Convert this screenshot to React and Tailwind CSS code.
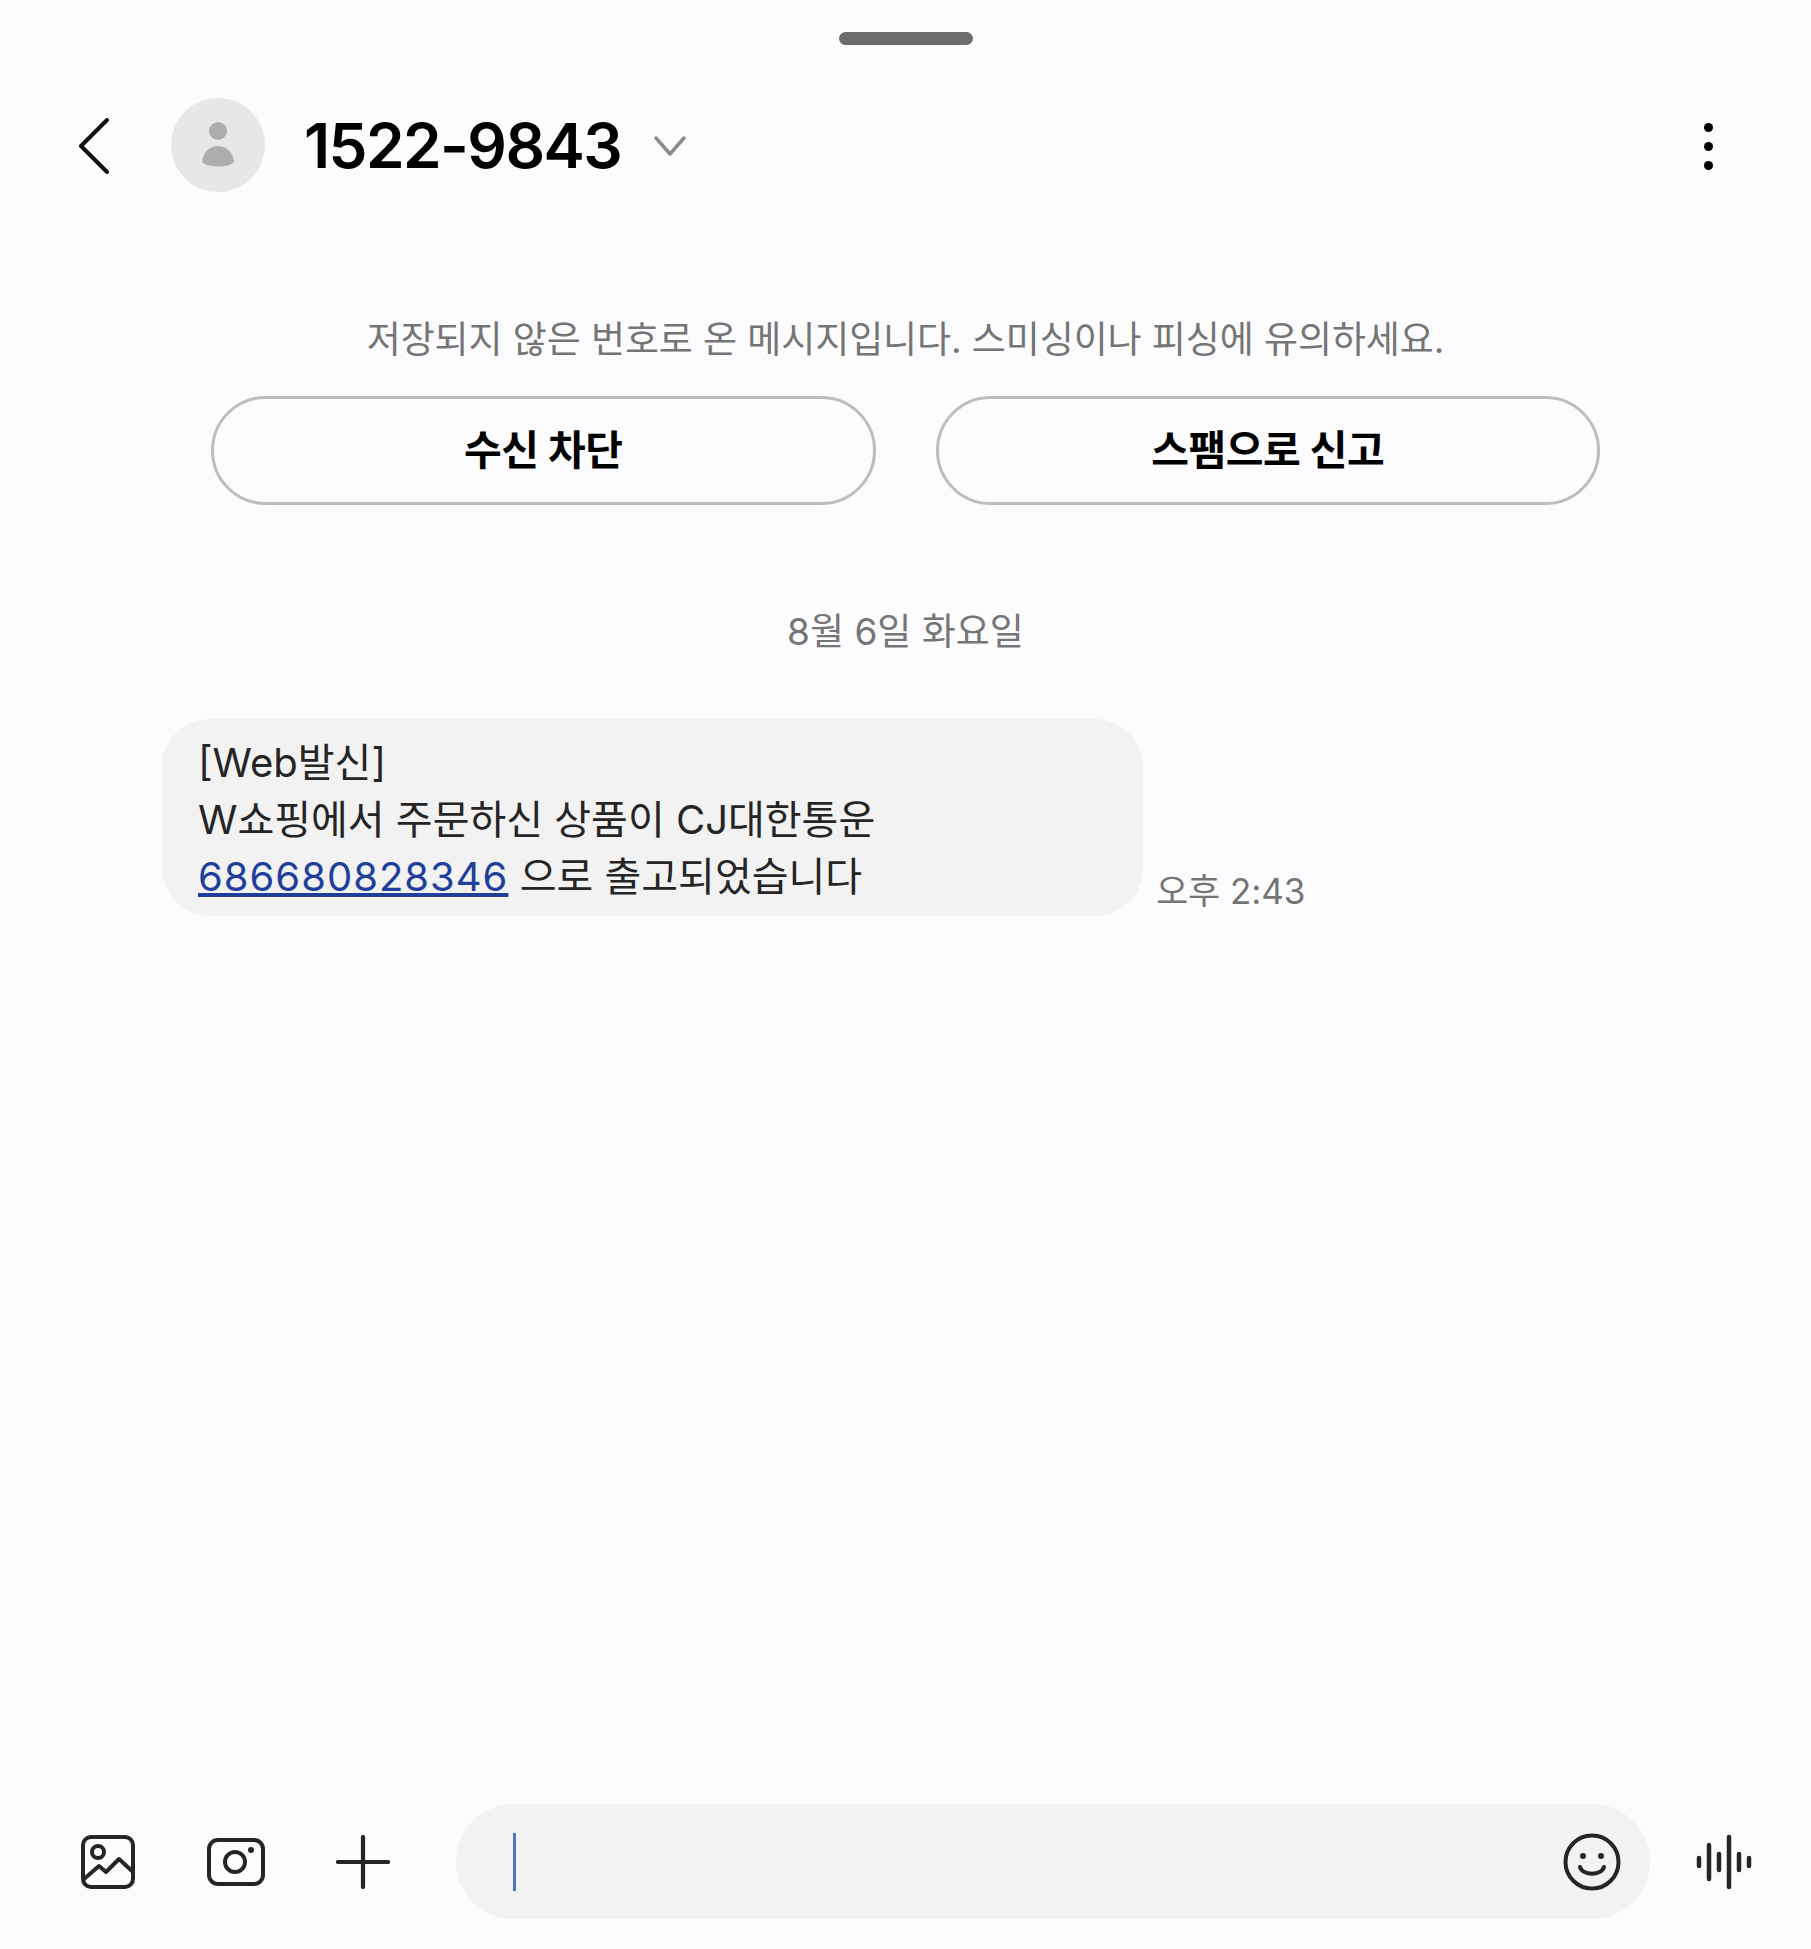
import React from 'react';

const font = { fontFamily: 'Inter, "Noto Sans CJK KR", sans-serif' };

function BackIcon() {
  return (
    <svg className="mt-[2px]" width="32" height="56" viewBox="0 0 32 56" fill="none" stroke="#111" strokeWidth="4" strokeLinecap="round" strokeLinejoin="round">
      <path d="M28 2 L2 28 L28 54" />
    </svg>
  );
}

function PersonIcon() {
  return (
    <svg width="32" height="46" viewBox="0 0 32 46" fill="#adadad">
      <circle cx="16" cy="9" r="9" />
      <path d="M0 40 C1 30 8 24 16 24 C24 24 31 30 32 40 C27 46 5 46 0 40 Z" />
    </svg>
  );
}

function GalleryIcon() {
  return (
    <svg width="54" height="54" viewBox="0 0 54 54" fill="none" stroke="#252525" strokeWidth="4" strokeLinecap="round" strokeLinejoin="round">
      <rect x="2" y="2" width="50" height="50" rx="8" />
      <circle cx="17" cy="17" r="6" />
      <path d="M3 44 L18 31 L25 37 L38 24 L51 36" />
    </svg>
  );
}

function CameraIcon() {
  return (
    <svg width="58" height="48" viewBox="0 0 58 48" fill="none" stroke="#252525" strokeWidth="4">
      <rect x="2" y="2" width="54" height="44" rx="9" />
      <circle cx="28" cy="24" r="10" />
      <circle cx="44" cy="12" r="3" fill="#252525" stroke="none" />
    </svg>
  );
}

function PlusIcon() {
  return (
    <svg width="54" height="54" viewBox="0 0 54 54" fill="none" stroke="#252525" strokeWidth="4.2" strokeLinecap="round">
      <path d="M27 2 V52 M2 27 H52" />
    </svg>
  );
}

function SmileIcon() {
  return (
    <svg width="58" height="58" viewBox="0 0 58 58" fill="none" stroke="#252525" strokeWidth="4" strokeLinecap="round">
      <circle cx="29" cy="29" r="26.5" />
      <circle cx="20" cy="23" r="3" fill="#252525" stroke="none" />
      <circle cx="38" cy="23" r="3" fill="#252525" stroke="none" />
      <path d="M17 34 C20 43 38 43 41 34" strokeWidth="4" />
    </svg>
  );
}

function WaveIcon() {
  return (
    <svg width="58" height="56" viewBox="0 0 58 56" fill="none" stroke="#252525" strokeWidth="4.5" strokeLinecap="round">
      <path d="M3 24 V32 M13 11 V45 M23 20 V36 M33 3 V53 M43 20 V36 M53 24 V32" />
    </svg>
  );
}

export default function App() {
  return (
    <div className="flex h-[1949px] w-[1811px] flex-col bg-[#fcfcfe]" style={font}>
      <div className="flex justify-center pt-8">
        <div className="h-[13px] w-[134px] rounded-full bg-[#6b6b6d]" />
      </div>

      {/* header */}
      <div className="mt-[53px] flex h-[94px] items-center pl-[79px] pr-[98px]">
        <BackIcon />
        <div className="ml-[60px] flex h-[94px] w-[94px] items-center justify-center rounded-full bg-[#e7e7e7]">
          <PersonIcon />
        </div>
        <div className="ml-[39px] mt-[2px] text-[62px] font-semibold leading-none tracking-[-1.6px] text-black">1522-9843</div>
        <svg className="ml-[33px] mt-[2px]" width="32" height="22" viewBox="0 0 32 22" fill="none" stroke="#8c8c8c" strokeWidth="3.5" strokeLinecap="round" strokeLinejoin="round">
          <path d="M2 3 L16 19 L30 3" />
        </svg>
        <div className="ml-auto mt-[2px] flex flex-col gap-[10px]">
          <div className="h-[9px] w-[9px] rounded-full bg-black" />
          <div className="h-[9px] w-[9px] rounded-full bg-black" />
          <div className="h-[9px] w-[9px] rounded-full bg-black" />
        </div>
      </div>

      {/* unknown number notice */}
      <div className="mt-[123px] text-center text-[37px] leading-[50px] tracking-[-0.1px] text-[#757575]">
        저장되지 않은 번호로 온 메시지입니다. 스미싱이나 피싱에 유의하세요.
      </div>
      <div className="mt-[31px] flex gap-[60px] pl-[211px] pr-[211px]">
        <div className="flex h-[109px] flex-1 items-center justify-center rounded-full border-[3px] border-[#bdbdbd] text-[41px] font-bold tracking-[-0.4px] text-black">수신 차단</div>
        <div className="flex h-[109px] flex-1 items-center justify-center rounded-full border-[3px] border-[#bdbdbd] text-[41px] font-bold tracking-[-0.4px] text-black">스팸으로 신고</div>
      </div>

      <div className="mt-[102px] text-center text-[37px] leading-[50px] text-[#757575]">8월 6일 화요일</div>

      {/* message */}
      <div className="mt-[62px] flex items-end pl-[162px]">
        <div className="h-[197px] w-[981px] rounded-[48px] bg-[#f2f2f2] px-[36px] pt-[15px] text-[40px] leading-[57px] text-[#252525]">
          <div>[Web발신]</div>
          <div>W쇼핑에서 주문하신 상품이 CJ대한통운</div>
          <div>
            <span className="tracking-[1px] text-[#1f3f9c] underline">686680828346</span> 으로 출고되었습니다
          </div>
        </div>
        <div className="ml-[13px] text-[35px] leading-[50px] tracking-[-0.1px] text-[#757575]">오후 2:43</div>
      </div>

      {/* composer */}
      <div className="mb-[30px] mt-auto flex items-center pl-[81px] pr-[57px]">
        <GalleryIcon />
        <div className="ml-[72px]"><CameraIcon /></div>
        <div className="ml-[71px]"><PlusIcon /></div>
        <div className="ml-[66px] flex h-[115px] flex-1 items-center rounded-full bg-[#f2f2f2] pl-[57px] pr-[29px]">
          <div className="h-[58px] w-[3px] bg-[#4a78c4]" />
          <div className="ml-auto"><SmileIcon /></div>
        </div>
        <div className="ml-[46px]"><WaveIcon /></div>
      </div>
    </div>
  );
}
